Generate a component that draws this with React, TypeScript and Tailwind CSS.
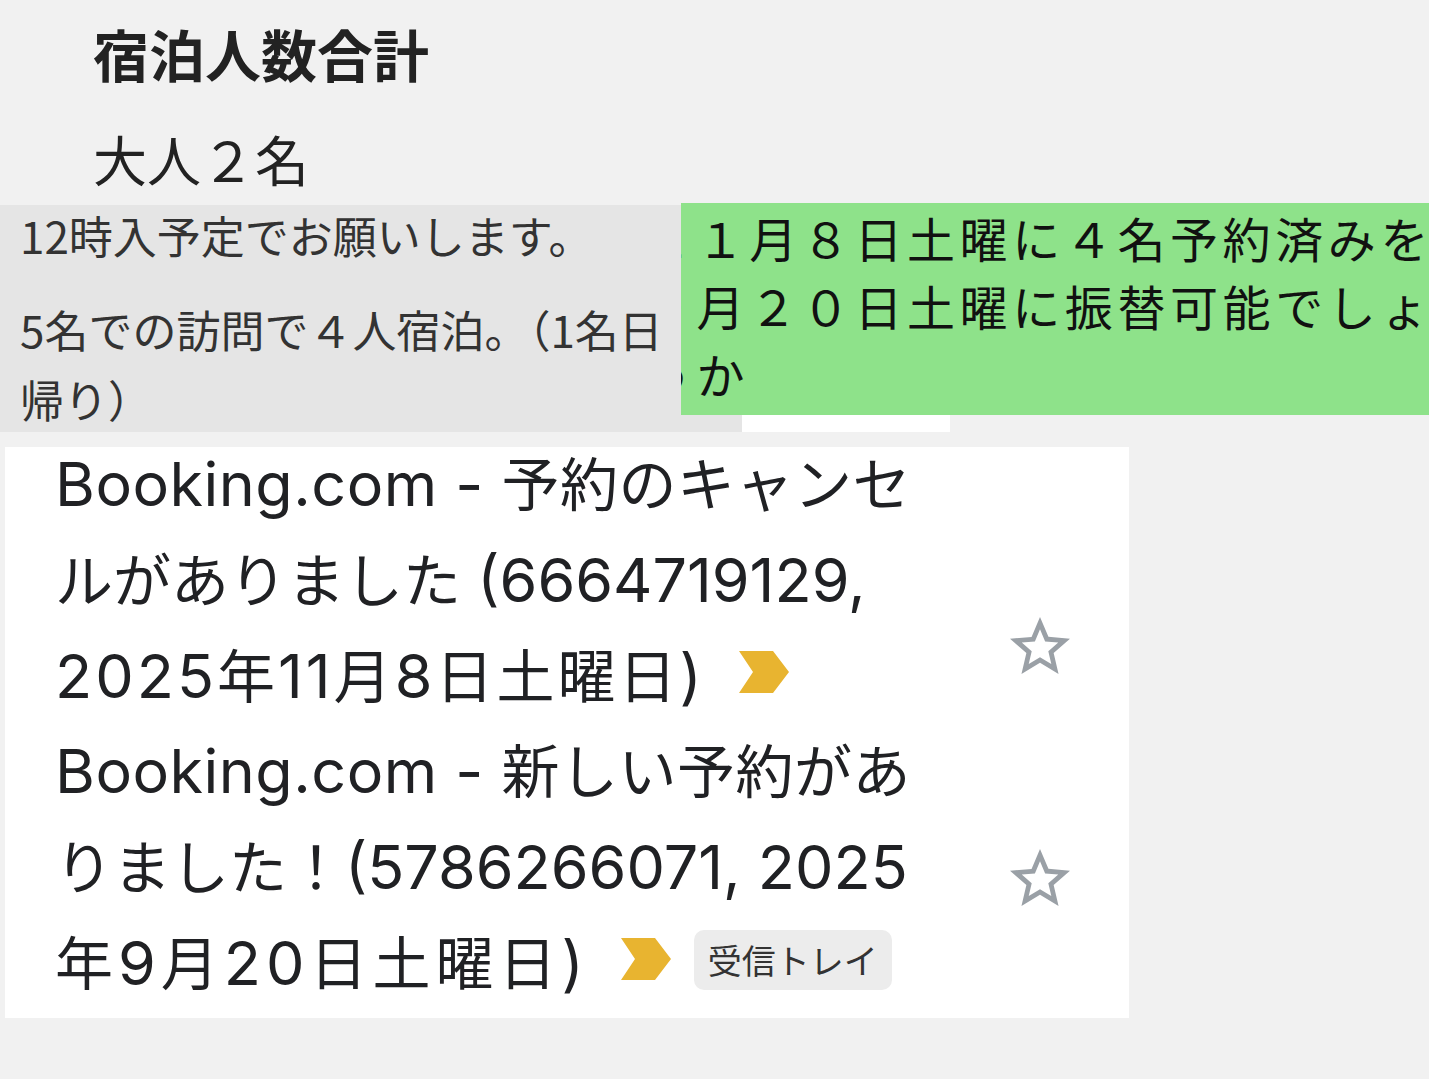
import React from "react";

const Star = () => (
  <svg width="72" height="72" viewBox="0 0 24 24" aria-hidden="true">
    <path
      fill="#9aa0a6"
      d="M22 9.24l-7.19-.62L12 2 9.19 8.63 2 9.24l5.46 4.73L5.82 21 12 17.27 18.18 21l-1.63-7.03L22 9.24zM12 15.4l-3.76 2.27 1-4.28-3.32-2.88 4.38-.38L12 6.1l1.71 4.04 4.38.38-3.32 2.88 1 4.28L12 15.4z"
    />
  </svg>
);

const Chevron = () => (
  <svg
    width="50"
    height="42"
    viewBox="0 0 50 42"
    className="block"
    aria-hidden="true"
  >
    <polygon points="0,0 34,0 50,21 34,42 0,42 14,21" fill="#e8b430" />
  </svg>
);

const L = ({ children }: { children: React.ReactNode }) => (
  <span className="text-[61px]">{children}</span>
);

export default function App() {
  const cjk = { fontFamily: '"Noto Sans CJK JP", "Noto Sans", sans-serif' };
  const mail = {
    fontFamily: 'Inter, "Noto Sans CJK JP", "Noto Sans", sans-serif',
  };
  return (
    <div
      className="w-[1429px] h-[1079px] bg-[#f1f1f1] overflow-hidden text-[#222]"
      style={cjk}
    >
      <div className="pl-[93px] pt-[21px]">
        <div className="text-[56px] font-bold leading-[64px] text-[#222]">
          宿泊人数合計
        </div>
        <div className="text-[54px] leading-[64px] mt-[42px] text-[#222]">
          大人２名
        </div>
      </div>

      <div className="flex mt-[12px]">
        <div className="w-[681px] shrink-0 h-[227px] mt-[2px] bg-[#e5e5e5] pl-[20px] text-[44px] text-[#333] whitespace-nowrap overflow-hidden">
          <div className="leading-[68px] mt-[-4px]">12時入予定でお願いします。</div>
          <div className="leading-[70px] mt-[25px]">
            <div>5名での訪問で４人宿泊。（1名日</div>
            <div>帰り）</div>
          </div>
        </div>
        <div className="flex-1 min-w-0 flex flex-col">
          <div className="h-[212px] bg-[#8ee28a] overflow-hidden text-[48px] leading-[68px] tracking-[4.6px] text-[#111] whitespace-nowrap">
            <div className="ml-[-37px]">
              <div>１１月８日土曜に４名予約済みを</div>
              <div>９月２０日土曜に振替可能でしょ</div>
              <div>うか</div>
            </div>
          </div>
          <div className="flex h-[17px]">
            <div className="w-[61px] bg-[#e5e5e5]" />
            <div className="w-[208px] bg-white" />
          </div>
        </div>
      </div>

      <div
        className="ml-[5px] mt-[15px] w-[1124px] h-[571px] bg-white overflow-hidden text-[#202124]"
        style={mail}
      >
        <div className="mt-[-10px] text-[58px] leading-[95px] whitespace-nowrap">
          <div className="flex">
            <div className="w-[999px] pl-[50px]">
              <div className="tracking-[0.5px]">
                <L>Booking.com - </L>予約のキャンセ
              </div>
              <div>
                ルがありました <L>(6664719129,</L>
              </div>
              <div className="flex items-center h-[95px]">
                <span className="tracking-[3px]">
                  <L>2025</L>年<L>11</L>月<L>8</L>日土曜日<L>)</L>
                </span>
                <span className="ml-[34px] -translate-y-[5px]">
                  <Chevron />
                </span>
              </div>
            </div>
            <div className="mt-[174px]">
              <Star />
            </div>
          </div>
          <div className="flex">
            <div className="w-[999px] pl-[50px]">
              <div className="tracking-[0.5px]">
                <L>Booking.com - </L>新しい予約があ
              </div>
              <div>
                りました！<L>(5786266071, 2025</L>
              </div>
              <div className="flex items-center h-[95px]">
                <span className="tracking-[5px]">
                  年<L>9</L>月<L>20</L>日土曜日<L>)</L>
                </span>
                <span className="ml-[32px] -translate-y-[5px]">
                  <Chevron />
                </span>
                <span
                  className="ml-[23px] -translate-y-[4px] inline-flex items-center h-[60px] px-[14px] rounded-[10px] bg-[#ececec] text-[34px] leading-none text-[#333]"
                  style={cjk}
                >
                  受信トレイ
                </span>
              </div>
            </div>
            <div className="mt-[119px]">
              <Star />
            </div>
          </div>
        </div>
      </div>
    </div>
  );
}
